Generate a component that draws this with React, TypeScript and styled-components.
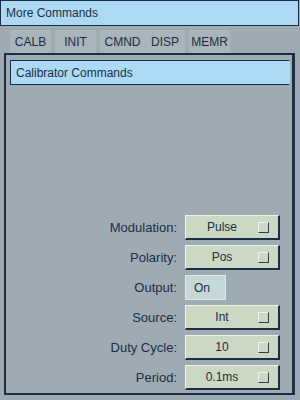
import styled, { createGlobalStyle } from "styled-components";

const GlobalStyle = createGlobalStyle`
  html, body {
    margin: 0;
    padding: 0;
    background: #9eabb2;
  }
  body {
    font-family: "Liberation Sans", Arial, sans-serif;
    font-size: 12px;
    color: #1c2d45;
  }
`;

const tabs = ["CALB", "INIT", "CMND", "DISP", "MEMR"];

interface Field {
  label: string;
  value: string;
  kind: "menu" | "toggle";
}

const fields: Field[] = [
  { label: "Modulation:", value: "Pulse", kind: "menu" },
  { label: "Polarity:", value: "Pos", kind: "menu" },
  { label: "Output:", value: "On", kind: "toggle" },
  { label: "Source:", value: "Int", kind: "menu" },
  { label: "Duty Cycle:", value: "10", kind: "menu" },
  { label: "Period:", value: "0.1ms", kind: "menu" },
];

function App() {
  return (
    <Screen>
      <GlobalStyle />
      <TitleBar>More Commands</TitleBar>
      <TabRow>
        {tabs.map((t) => (
          <Tab key={t}>{t}</Tab>
        ))}
      </TabRow>
      <Panel>
        <PanelHeader>Calibrator Commands</PanelHeader>
        <Form>
          {fields.map((f) => (
            <Row key={f.label}>
              <Label>{f.label}</Label>
              {f.kind === "menu" ? (
                <MenuButton>
                  <MenuText>{f.value}</MenuText>
                  <Indicator />
                </MenuButton>
              ) : (
                <Toggle>{f.value}</Toggle>
              )}
            </Row>
          ))}
        </Form>
      </Panel>
    </Screen>
  );
}

export default App;

const Screen = styled.div`
  width: 300px;
  height: 400px;
  display: flex;
  flex-direction: column;
  box-sizing: border-box;
  background: #9eabb2;
`;

const TitleBar = styled.div`
  height: 26px;
  width: 299px;
  box-sizing: border-box;
  border: 1px solid #1c2d45;
  background: #acdaf4;
  padding-left: 5px;
  display: flex;
  align-items: center;
  font-size: 12px;
`;

const TabRow = styled.div`
  display: flex;
  gap: 4px;
  padding-left: 10px;
  margin-top: 4px;
  height: 23px;
`;

const Tab = styled.div`
  width: 41px;
  display: flex;
  align-items: center;
  justify-content: center;
  background: #a8b5bb;
  font-size: 12px;
  &:nth-child(3) {
    width: 45px;
  }
  &:nth-child(4) {
    width: 40px;
    margin-left: -4px;
  }
`;

const Panel = styled.div`
  margin: 0 5px 0 4px;
  height: 342px;
  box-sizing: border-box;
  border: 2px solid #1c2d45;
  border-right-width: 3px;
  display: flex;
  flex-direction: column;
`;

const PanelHeader = styled.div`
  margin: 5px 2px 0 4px;
  height: 25px;
  box-sizing: border-box;
  border: 1px solid #1c2d45;
  border-right-color: #acdaf4;
  background: #acdaf4;
  padding-left: 5px;
  display: flex;
  align-items: center;
`;

const Form = styled.div`
  margin-top: auto;
  display: flex;
  flex-direction: column;
  gap: 5px;
  padding: 0 12px 3px 0;
`;

const Row = styled.div`
  display: grid;
  grid-template-columns: 1fr 95px;
  column-gap: 8px;
  align-items: center;
  height: 25px;
`;

const Label = styled.span`
  text-align: right;
  font-size: 13px;
`;

const MenuButton = styled.div`
  height: 25px;
  box-sizing: border-box;
  border-style: solid;
  border-width: 1px 2px 2px 1px;
  border-color: #eef2ea #1c2d45 #1c2d45 #eef2ea;
  background: #cbd8c3;
  display: flex;
  align-items: center;
  padding-right: 9px;
  font-size: 12px;
`;

const MenuText = styled.span`
  flex: 1;
  text-align: center;
`;

const Indicator = styled.span`
  width: 11px;
  height: 11px;
  box-sizing: border-box;
  border-style: solid;
  border-width: 1px;
  border-color: #eef2ea #2f3b4b #2f3b4b #eef2ea;
`;

const Toggle = styled.div`
  width: 41px;
  height: 25px;
  box-sizing: border-box;
  border: 1px solid #dde8e6;
  background: #c4d8d8;
  padding-left: 8px;
  display: flex;
  align-items: center;
  font-size: 12px;
`;
